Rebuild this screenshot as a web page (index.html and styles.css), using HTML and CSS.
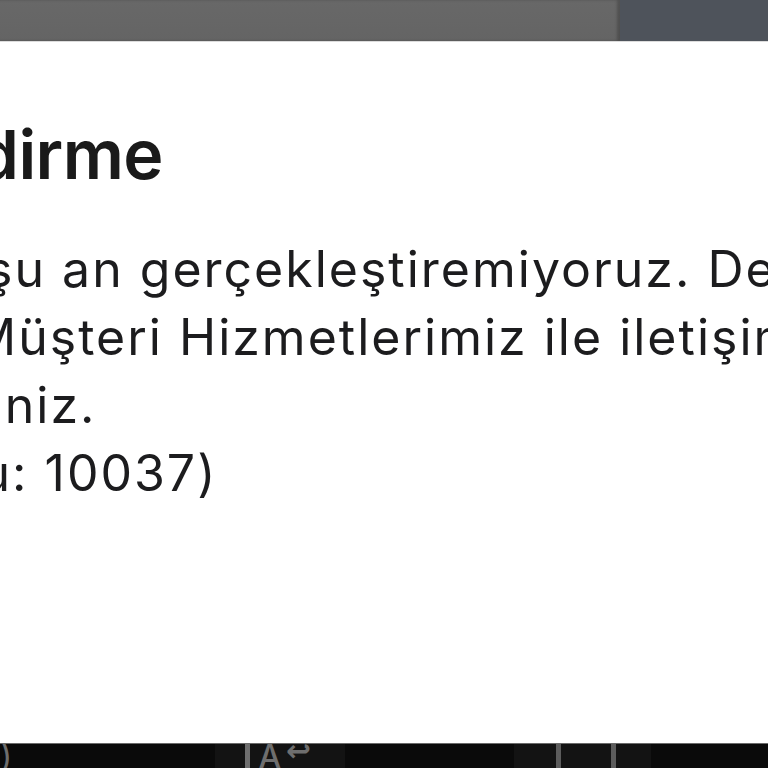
FILE: index.html
```html
<!DOCTYPE html>
<html lang="tr">
<head>
<meta charset="utf-8">
<title>Bilgilendirme</title>
<link rel="stylesheet" href="styles.css">
</head>
<body>
<div class="screen">
  <div class="topbar">
    <div class="top-left"></div>
    <div class="top-right"></div>
  </div>
  <div class="dialog">
    <div class="dialog-inner">
      <h1 class="title">Bilgilendirme</h1>
      <p class="message">
        <span class="line">İsteğinizi şu an gerçekleştiremiyoruz. Detaylı</span>
        <span class="line">bilgi için Müşteri Hizmetlerimiz ile iletişime</span>
        <span class="line">geçebilirsiniz.</span>
        <span class="line">(hata kodu: 10037)</span>
      </p>
    </div>
  </div>
  <div class="keybar">
    <span class="kb-paren">)</span>
    <div class="kb-group kb-text">
      <span class="kb-cursor"></span>
      <span class="kb-a">A</span>
      <span class="kb-ret">↩</span>
    </div>
    <div class="kb-group kb-bars">
      <span class="kb-bar"></span>
      <span class="kb-bar"></span>
    </div>
  </div>
</div>
</body>
</html>
```

FILE: styles.css
```css
html, body {
  margin: 0;
  padding: 0;
  background: #ffffff;
}
.screen {
  width: 768px;
  height: 768px;
  overflow: hidden;
  display: flex;
  flex-direction: column;
  font-family: Inter, "Noto Sans", "Liberation Sans", sans-serif;
}
.topbar {
  height: 41px;
  flex: none;
  display: flex;
  border-bottom: 1px solid #dcdcdc;
}
.top-left {
  width: 620px;
  background: linear-gradient(#686868, #646464);
  box-shadow: inset -3px 0 3px rgba(0,0,0,0.22);
}
.top-right {
  flex: 1;
  background: #4e535b;
}
.dialog {
  flex: 1;
  background: #ffffff;
  overflow: hidden;
  min-height: 0;
}
.dialog-inner {
  margin-left: -259px;
  padding-top: 72px;
  white-space: nowrap;
  color: #1c1c1e;
}
.title {
  margin: 0;
  font-size: 68px;
  line-height: 80px;
  font-weight: 600;
  letter-spacing: -0.6px;
  color: #1a1a1a;
}
.message {
  margin: 41px 0 0 0;
  font-size: 50px;
  line-height: 68px;
  font-weight: 400;
  letter-spacing: 2px;
}
.line {
  display: block;
}
.keybar {
  height: 24px;
  flex: none;
  background: #0a0a0a;
  border-top: 1px solid #6a6a6a;
  display: flex;
  align-items: flex-start;
  overflow: hidden;
  color: #6e6e6e;
}
.kb-paren {
  margin-left: 0;
  font-size: 34px;
  line-height: 30px;
  margin-top: -3px;
}
.kb-group {
  height: 24px;
  background: #131313;
  display: flex;
  align-items: flex-start;
}
.kb-text {
  margin-left: 203px;
  width: 130px;
  padding-left: 30px;
  box-sizing: border-box;
}
.kb-cursor {
  width: 5px;
  height: 24px;
  background: #6e6e6e;
}
.kb-a {
  margin-left: 8px;
  font-size: 32px;
  line-height: 30px;
  margin-top: -2px;
  font-weight: 500;
}
.kb-ret {
  margin-left: 5px;
  font-size: 30px;
  line-height: 22px;
  margin-top: -4px;
  font-family: "DejaVu Sans", sans-serif;
  font-weight: 700;
}
.kb-bars {
  margin-left: 169px;
  width: 137px;
  padding-left: 42px;
  box-sizing: border-box;
  gap: 50px;
}
.kb-bar {
  width: 5px;
  height: 24px;
  background: #5c5c5c;
}
```
